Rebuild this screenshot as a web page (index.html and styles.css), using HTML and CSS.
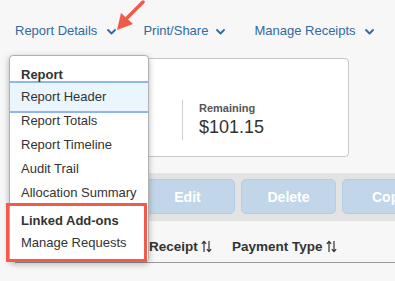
FILE: index.html
```html
<!DOCTYPE html>
<html>
<head>
<meta charset="utf-8">
<link rel="stylesheet" href="styles.css">
</head>
<body>
<div class="page">
  <nav class="nav">
    <a class="nav-item">Report Details<svg class="chev" width="9" height="6" viewBox="0 0 9 6"><path d="M1 1 L4.5 4.5 L8 1" fill="none" stroke="#2f6aa3" stroke-width="1.8" stroke-linecap="round" stroke-linejoin="round"/></svg></a>
    <a class="nav-item">Print/Share<svg class="chev" width="9" height="6" viewBox="0 0 9 6"><path d="M1 1 L4.5 4.5 L8 1" fill="none" stroke="#2f6aa3" stroke-width="1.8" stroke-linecap="round" stroke-linejoin="round"/></svg></a>
    <a class="nav-item">Manage Receipts<svg class="chev" width="9" height="6" viewBox="0 0 9 6"><path d="M1 1 L4.5 4.5 L8 1" fill="none" stroke="#2f6aa3" stroke-width="1.8" stroke-linecap="round" stroke-linejoin="round"/></svg></a>
  </nav>

  <section class="card">
    <div class="stat stat-first"></div>
    <div class="stat stat-divided">
      <div class="stat-label">Remaining</div>
      <div class="stat-value">$101.15</div>
    </div>
  </section>

  <div class="toolbar">
    <button class="btn"></button>
    <button class="btn">Edit</button>
    <button class="btn">Delete</button>
    <button class="btn">Copy</button>
  </div>

  <div class="table-head">
    <div class="th th-first"></div>
    <div class="th th-receipt">Receipt<svg class="sort" width="11" height="13" viewBox="0 0 11 13"><path d="M3 12 V1.5 M0.8 3.8 L3 1.3 L5.2 3.8 M8 1 V11.5 M5.8 9.2 L8 11.7 L10.2 9.2" fill="none" stroke="#333" stroke-width="1.2"/></svg></div>
    <div class="th">Payment Type<svg class="sort" width="11" height="13" viewBox="0 0 11 13"><path d="M3 12 V1.5 M0.8 3.8 L3 1.3 L5.2 3.8 M8 1 V11.5 M5.8 9.2 L8 11.7 L10.2 9.2" fill="none" stroke="#333" stroke-width="1.2"/></svg></div>
  </div>
</div>

<div class="menu">
  <div class="menu-head">Report</div>
  <div class="menu-item active">Report Header</div>
  <div class="menu-item">Report Totals</div>
  <div class="menu-item">Report Timeline</div>
  <div class="menu-item">Audit Trail</div>
  <div class="menu-item">Allocation Summary</div>
  <div class="menu-head menu-head-2">Linked Add-ons</div>
  <div class="menu-item">Manage Requests</div>
</div>

<div class="highlight-box"></div>

<svg class="pointer" width="40" height="40" viewBox="0 0 40 40">
  <line x1="27" y1="2" x2="10" y2="19" stroke="#ef5b4b" stroke-width="3.5" stroke-linecap="round"/>
  <polygon points="1,30 5,13 17,24" fill="#ef5b4b"/>
</svg>
</body>
</html>
```

FILE: styles.css
```css
html, body {
  margin: 0;
  padding: 0;
}
body {
  background: #f7f7f7;
  font-family: "Liberation Sans", Arial, Helvetica, sans-serif;
  color: #333;
  width: 395px;
  height: 281px;
  overflow: hidden;
  position: relative;
}
.page {
  padding-left: 15px;
}
.nav {
  display: flex;
  padding-top: 23px;
  height: 16px;
  line-height: 16px;
  font-size: 13px;
}
.nav-item {
  display: flex;
  align-items: center;
  color: #2f6aa3;
  white-space: nowrap;
}
.chev {
  margin-left: 10px;
  margin-top: 1px;
}
.nav-item:nth-child(1) { margin-right: 27px; }
.nav-item:nth-child(2) { margin-right: 29px; }
.nav-item:nth-child(2) .chev { margin-left: 8px; }
.nav-item:nth-child(3) .chev { margin-left: 9px; }

.card {
  margin-top: 19px;
  background: #fff;
  border: 1px solid #c8c8c8;
  border-radius: 4px;
  display: flex;
  align-items: flex-start;
  padding-top: 41px;
  box-sizing: border-box;
  height: 99px;
  width: 334px;
}
.stat-first {
  width: 166px;
}
.stat-divided {
  border-left: 1px solid #cfcfcf;
  padding-left: 16px;
  height: 40px;
}
.stat-label {
  font-size: 11px;
  font-weight: bold;
  color: #555;
  line-height: 14px;
  margin-top: 1px;
}
.stat-value {
  font-size: 18px;
  line-height: 24px;
  color: #333;
}

.toolbar {
  margin-top: 16px;
  height: 48px;
  background: #e3e3e3;
  display: flex;
  gap: 6px;
  padding: 6px 0 0 24px;
  box-sizing: border-box;
  overflow: hidden;
}
.btn {
  flex: none;
  width: 95px;
  height: 35px;
  background: #c1d6e8;
  border: 1px solid #b3cde5;
  border-radius: 5px;
  color: #fff;
  font-family: "Liberation Sans", Arial, sans-serif;
  font-size: 14px;
  font-weight: bold;
  padding: 0;
}

.table-head {
  display: flex;
  align-items: center;
  height: 42px;
  padding-top: 10px;
  box-sizing: border-box;
  border-bottom: 1px solid #9a9a9a;
  font-size: 13.5px;
  font-weight: bold;
  color: #333;
}
.th {
  display: flex;
  align-items: center;
  white-space: nowrap;
}
.th-first { width: 134px; }
.th-receipt { width: 83px; }
.sort { margin-left: 3px; }

.menu {
  position: absolute;
  left: 9px;
  top: 55px;
  width: 140px;
  height: 207px;
  box-sizing: border-box;
  background: #fff;
  border: 1px solid #b0b0b0;
  border-radius: 4px;
  box-shadow: 0 2px 6px rgba(0, 0, 0, 0.28);
  padding-top: 9px;
  font-size: 13px;
  color: #333;
}
.menu-head {
  font-weight: bold;
  line-height: 20px;
  padding-left: 11px;
  color: #333;
}
.menu-head-2 {
  margin-top: 6px;
}
.menu-item {
  line-height: 24px;
  padding-left: 11px;
  white-space: nowrap;
}
.menu-item.active {
  margin: -4px 0;
  padding: 2px 0 2px 11px;
  background: #eaf5fe;
  border-top: 2px solid #8eb5f0;
  border-bottom: 2px solid #8eb5f0;
}

.highlight-box {
  position: absolute;
  left: 6px;
  top: 203px;
  width: 141px;
  height: 59px;
  box-sizing: border-box;
  border: 3px solid #f25b4b;
}

.pointer {
  position: absolute;
  left: 116px;
  top: 0;
}
```
